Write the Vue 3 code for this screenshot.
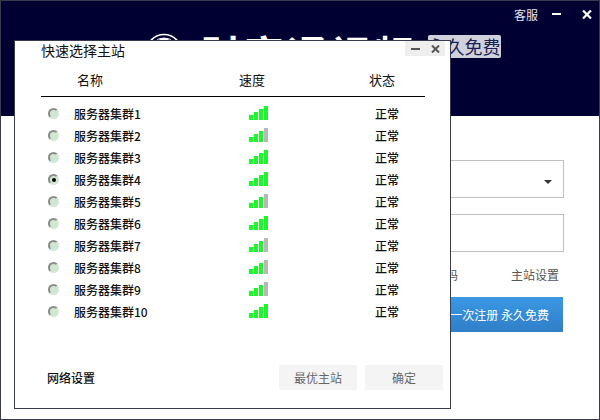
<script setup>
const servers = [
  { name: '服务器集群1', grey: false },
  { name: '服务器集群2', grey: true },
  { name: '服务器集群3', grey: false },
  { name: '服务器集群4', grey: false, checked: true },
  { name: '服务器集群5', grey: true },
  { name: '服务器集群6', grey: false },
  { name: '服务器集群7', grey: true },
  { name: '服务器集群8', grey: true },
  { name: '服务器集群9', grey: true },
  { name: '服务器集群10', grey: false },
]
</script>

<template>
  <div class="window">
    <header class="top">
      <div class="top-tools">
        <span class="service">客服</span>
        <span class="win-min"></span>
        <svg class="win-x" width="10" height="9" viewBox="0 0 10 9"><path d="M1 0.5 9 8.5M9 0.5 1 8.5" stroke="#fff" stroke-width="2.2" fill="none"/></svg>
      </div>
      <div class="brand">
        <svg class="logo" width="38" height="38" viewBox="0 0 38 38">
          <circle cx="19" cy="19" r="17.5" fill="none" stroke="#fff" stroke-width="1.6"/>
          <circle cx="19" cy="19" r="14" fill="none" stroke="#fff" stroke-width="1"/>
          <circle cx="19" cy="14" r="9" fill="#fff"/>
        </svg>
        <span class="brand-name">财富通视频</span>
        <span class="badge">永久免费</span>
      </div>
    </header>

    <main class="login">
      <div class="field">
        <i class="caret"></i>
      </div>
      <div class="field second"></div>
      <div class="links">
        <span>忘记密码</span>
        <span>主站设置</span>
      </div>
      <button class="register">第一次注册 永久免费</button>
    </main>

    <section class="dialog">
      <div class="dialog-tools">
        <span class="d-min"></span>
        <svg width="9" height="8" viewBox="0 0 9 8"><path d="M1 0.5 8 7.5M8 0.5 1 7.5" stroke="#555" stroke-width="2" fill="none"/></svg>
      </div>
      <h1 class="dialog-title">快速选择主站</h1>
      <div class="thead">
        <span>名称</span>
        <span>速度</span>
        <span>状态</span>
      </div>
      <ul class="rows">
        <li v-for="s in servers" :key="s.name" class="row">
          <span class="radio" :class="{ on: s.checked }"></span>
          <span>{{ s.name }}</span>
          <span class="bars">
            <i class="b1"></i><i class="b2"></i><i class="b3"></i><i class="b4" :class="{ grey: s.grey }"></i>
          </span>
          <span class="status">正常</span>
        </li>
      </ul>
      <footer class="dialog-foot">
        <span class="net">网络设置</span>
        <div class="btns">
          <button class="btn">最优主站</button>
          <button class="btn">确定</button>
        </div>
      </footer>
    </section>
  </div>
</template>

<style>
html, body { margin: 0; background: #fff; }
</style>

<style scoped>
.window {
  position: relative;
  width: 600px;
  height: 420px;
  box-sizing: border-box;
  border: 1px solid #383c4c;
  background: #fff;
  overflow: hidden;
  font-family: "Noto Sans CJK SC", "Liberation Sans", sans-serif;
  font-size: 12px;
}
.top {
  height: 115px;
  background: #000033;
  padding: 0;
  box-sizing: border-box;
}
.top-tools {
  height: 26px;
  display: flex;
  align-items: center;
  color: #e6e6ee;
  padding-left: 513px;
}
.service { width: 38px; font-size: 12px; }
.win-min { width: 9px; height: 2px; background: #fff; margin-right: 21px; }
.brand {
  display: flex;
  align-items: flex-start;
  padding: 6px 0 0 144px;
}
.logo { display: block; margin-right: 18px; }
.brand-name {
  color: #fff;
  font-weight: 700;
  font-size: 40px;
  line-height: 38px;
  height: 38px;
  overflow: hidden;
  letter-spacing: 3px;
  width: 227px;
  white-space: nowrap;
  margin-top: 1px;
}
.badge {
  margin-top: 2px;
  background: #cfd2dd;
  color: #1c2050;
  border-radius: 2px;
  font-size: 18px;
  line-height: 23px;
  height: 23px;
  width: 73px;
  text-align: center;
}
.login {
  width: 330px;
  margin-left: auto;
  margin-right: 35px;
  padding-top: 44px;
}
.field {
  height: 38px;
  box-sizing: border-box;
  border: 1px solid #c0c0c0;
  position: relative;
  background: #fff;
}
.second { margin-top: 16px; }
.caret {
  position: absolute;
  right: 11px;
  top: 19px;
  width: 0;
  height: 0;
  border-left: 4px solid transparent;
  border-right: 4px solid transparent;
  border-top: 4px solid #333;
}
.links {
  display: flex;
  justify-content: flex-end;
  gap: 53px;
  color: #555;
  height: 45px;
  align-items: center;
  padding-right: 5px;
}
.register {
  display: block;
  width: 329px;
  height: 35px;
  border: 0;
  padding: 0 14px 0 0;
  text-align: right;
  color: #fff;
  font: inherit;
  background: linear-gradient(#3a98e6, #2f7fc6);
}
.dialog {
  position: absolute;
  left: 13px;
  top: 39px;
  width: 437px;
  height: 369px;
  box-sizing: border-box;
  border: 1px solid #383c4c;
  background: #fff;
  padding: 0 7px 0 26px;
  color: #111;
}
.dialog-tools {
  position: absolute;
  top: 0;
  right: 5px;
  width: 40px;
  height: 15px;
  background: #eeeeee;
  display: flex;
  align-items: center;
  padding-left: 6px;
  box-sizing: border-box;
}
.d-min { width: 9px; height: 2px; background: #555; margin-right: 11px; }
.dialog-title {
  margin: 0;
  font-size: 14px;
  font-weight: 400;
  height: 21px;
  line-height: 19px;
}
.thead {
  display: grid;
  grid-template-columns: 162px 130px 1fr;
  padding-left: 36px;
  width: 384px;
  box-sizing: border-box;
  height: 35px;
  line-height: 13px;
  align-items: center;
  border-bottom: 1px solid #000;
  font-size: 13px;
}
.rows {
  list-style: none;
  margin: 0;
  padding: 5px 0 0;
  width: 384px;
}
.row {
  display: grid;
  grid-template-columns: 33px 175px 126px 1fr;
  height: 22px;
  align-items: center;
  font-size: 12px;
  font-weight: 500;
}
.radio {
  width: 11px;
  height: 11px;
  margin: 1px 0 0 7px;
  box-sizing: border-box;
  border-radius: 50%;
  background: #d2e7d3;
  border: 2px solid #d2e7d3;
  border-top-color: #8a8a8a;
  border-left-color: #8a8a8a;
  position: relative;
}
.radio.on::after {
  content: "";
  position: absolute;
  left: 1.5px;
  top: 1.5px;
  width: 4px;
  height: 4px;
  border-radius: 50%;
  background: #000;
}
.bars {
  display: flex;
  align-items: flex-end;
  gap: 1px;
  height: 14px;
}
.bars i { width: 4px; background: #19fb29; display: block; }
.b1 { height: 5px; }
.b2 { height: 8px; }
.b3 { height: 11px; }
.b4 { height: 14px; }
.bars i.grey { background: #b8b8b8; }
.dialog-foot {
  position: absolute;
  left: 32px;
  right: 7px;
  top: 324px;
  display: flex;
  justify-content: space-between;
  align-items: center;
}
.net { font-weight: 500; }
.btns { display: flex; gap: 8px; }
.btn {
  width: 78px;
  height: 25px;
  border: 0;
  padding: 0;
  background: #f4f4f4;
  color: #666;
  font: inherit;
}
</style>
